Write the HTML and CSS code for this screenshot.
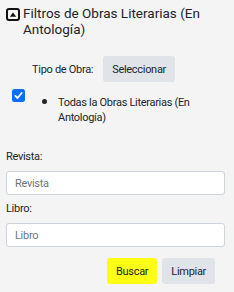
FILE: index.html
```html
<!DOCTYPE html>
<html lang="es">
<head>
<meta charset="utf-8">
<link rel="stylesheet" href="styles.css">
</head>
<body>
<div class="panel">
  <h2 class="title">
    <span class="toggle"><svg width="14" height="13" viewBox="0 0 14 13"><rect x="1" y="1" width="12" height="11" rx="2" fill="none" stroke="#111" stroke-width="2"/><path d="M3.8 8.8 L7 4.4 L10.2 8.8 Z" fill="#111"/></svg></span>
    <span class="title-text">Filtros de Obras Literarias (En Antología)</span>
  </h2>
  <div class="tipo">
    <span class="tipo-label">Tipo de Obra:</span>
    <button class="btn btn-grey">Seleccionar</button>
  </div>
  <div class="check-row">
    <span class="check"><svg width="13" height="13" viewBox="0 0 13 13"><rect width="13" height="13" rx="2.5" fill="#0d6efd"/><path d="M3.3 6.8 L5.5 9 L9.7 4" fill="none" stroke="#fff" stroke-width="1.8" stroke-linecap="round" stroke-linejoin="round"/></svg></span>
    <ul class="list"><li>Todas la Obras Literarias (En Antología)</li></ul>
  </div>
  <div class="field first">
    <label class="field-label">Revista:</label>
    <input class="input" type="text" placeholder="Revista">
  </div>
  <div class="field">
    <label class="field-label">Libro:</label>
    <input class="input" type="text" placeholder="Libro">
  </div>
  <div class="actions">
    <button class="btn btn-yellow">Buscar</button>
    <button class="btn btn-grey">Limpiar</button>
  </div>
</div>
</body>
</html>
```
FILE: styles.css
```css
html, body {
  margin: 0;
  padding: 0;
  background: #f4f4f4;
}
body {
  font-family: Roboto, "Noto Sans", sans-serif;
  color: #212529;
  font-size: 11px;
  letter-spacing: -0.3px;
}
.panel {
  padding: 5px 9px 0 6px;
}
.title {
  display: flex;
  align-items: flex-start;
  gap: 3px;
  margin: 0;
  font-size: 13.5px;
  font-weight: 400;
  line-height: 16px;
  letter-spacing: 0;
}
.toggle {
  display: flex;
  padding-top: 3px;
}
.tipo {
  display: flex;
  align-items: center;
  gap: 10px;
  margin: 19px 0 0 26px;
}
.btn {
  font-family: inherit;
  font-size: 11px;
  letter-spacing: -0.3px;
  border: none;
  border-radius: 3px;
  height: 26px;
  padding: 0 9px;
  color: #212529;
}
.btn-grey {
  background: #e0e3e7;
}
.btn-yellow {
  background: #ffff14;
}
.check-row {
  display: flex;
  align-items: flex-start;
  margin-top: 7px;
  padding-left: 6px;
}
.check {
  display: flex;
}
.list {
  margin: 5px 0 0;
  padding-left: 33px;
  line-height: 15px;
}
.list li::marker {
  font-size: 15px;
  letter-spacing: 0;
}
.field {
  display: flex;
  flex-direction: column;
  margin-top: 6px;
}
.field.first {
  margin-top: 24px;
}
.field-label {
  line-height: 15px;
  margin-bottom: 7px;
}
.input {
  font-family: inherit;
  font-size: 11px;
  letter-spacing: -0.3px;
  height: 24px;
  box-sizing: border-box;
  border: 1px solid #ced4da;
  border-radius: 3px;
  background: #fff;
  padding: 0 8px;
  color: #212529;
}
.input::placeholder {
  color: #6c757d;
}
.actions {
  display: flex;
  justify-content: flex-end;
  gap: 5px;
  margin-top: 11px;
  padding-right: 10px;
}
```
